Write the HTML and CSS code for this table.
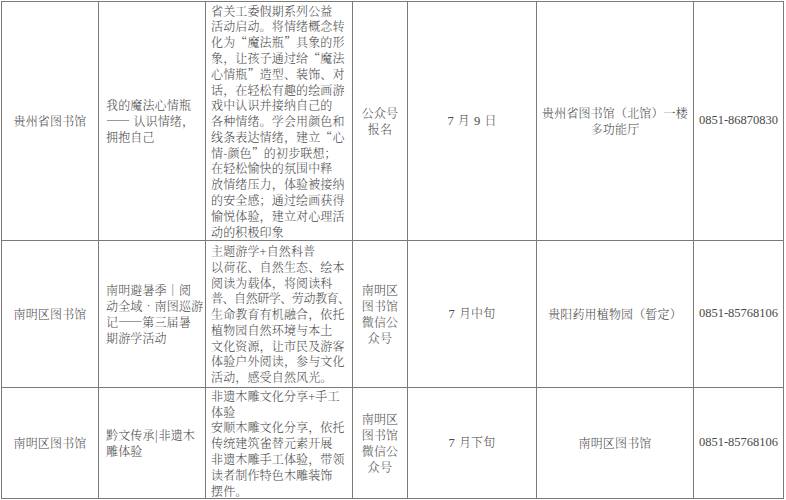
FILE: index.html
```html
<!DOCTYPE html>
<html lang="zh-CN">
<head>
<meta charset="utf-8">
<title>暑期活动安排</title>
<link rel="stylesheet" href="styles.css">
</head>
<body>
<div class="sheet">
  <div class="cell c-center"><div class="txt">贵州省图书馆</div></div>
  <div class="cell c-left"><div class="txt">我的魔法心情瓶<br>—— 认识情绪，<br>拥抱自己</div></div>
  <div class="cell c-desc"><div class="txt">省关工委假期系列公益<br>活动启动。将情绪概念转<br>化为“魔法瓶”具象的形<br>象，让孩子通过给“魔法<br>心情瓶”造型、装饰、对<br>话，在轻松有趣的绘画游<br>戏中认识并接纳自己的<br>各种情绪。学会用颜色和<br>线条表达情绪，建立“心<br>情-颜色”的初步联想；<br>在轻松愉快的氛围中释<br>放情绪压力，体验被接纳<br>的安全感；通过绘画获得<br>愉悦体验，建立对心理活<br>动的积极印象</div></div>
  <div class="cell c-center"><div class="txt">公众号<br>报名</div></div>
  <div class="cell c-center"><div class="txt"><span class="num">7</span>月<span class="num">9</span>日</div></div>
  <div class="cell c-center"><div class="txt">贵州省图书馆（北馆）一楼<br>多功能厅</div></div>
  <div class="cell c-center tel"><div class="txt">0851-86870830</div></div>

  <div class="cell c-center"><div class="txt">南明区图书馆</div></div>
  <div class="cell c-left"><div class="txt">南明避暑季｜阅<br>动全域•南图巡游<br>记——第三届暑<br>期游学活动</div></div>
  <div class="cell c-desc"><div class="txt">主题游学+自然科普<br>以荷花、自然生态、绘本<br>阅读为载体，将阅读科<br><span class="tight">普、自然研学、劳动教育、</span><br>生命教育有机融合，依托<br>植物园自然环境与本土<br>文化资源，让市民及游客<br>体验户外阅读，参与文化<br>活动，感受自然风光。</div></div>
  <div class="cell c-center"><div class="txt">南明区<br>图书馆<br>微信公<br>众号</div></div>
  <div class="cell c-center"><div class="txt"><span class="num">7</span>月中旬</div></div>
  <div class="cell c-center"><div class="txt">贵阳药用植物园（暂定）</div></div>
  <div class="cell c-center tel"><div class="txt">0851-85768106</div></div>

  <div class="cell c-center"><div class="txt">南明区图书馆</div></div>
  <div class="cell c-left"><div class="txt">黔文传承|非遗木<br>雕体验</div></div>
  <div class="cell c-desc"><div class="txt">非遗木雕文化分享+手工<br>体验<br>安顺木雕文化分享，依托<br>传统建筑雀替元素开展<br>非遗木雕手工体验，带领<br>读者制作特色木雕装饰<br>摆件。</div></div>
  <div class="cell c-center"><div class="txt">南明区<br>图书馆<br>微信公<br>众号</div></div>
  <div class="cell c-center"><div class="txt"><span class="num">7</span>月下旬</div></div>
  <div class="cell c-center"><div class="txt">南明区图书馆</div></div>
  <div class="cell c-center tel"><div class="txt">0851-85768106</div></div>
</div>
</body>
</html>
```

FILE: styles.css
```css
html, body {
  margin: 0;
  padding: 0;
  background: #ffffff;
}

body {
  font-family: "Noto Serif CJK SC", "Noto Sans CJK SC", "Liberation Serif", serif;
  font-size: 12px;
  color: #4a4a4a;
}

.sheet {
  display: grid;
  grid-template-columns: 96px 106px 146px 54px 128px 156px 89px;
  grid-template-rows: 238px 146px 110px;
  gap: 1px;
  padding: 1px;
  margin: 1px 0 0 1px;
  width: max-content;
  background: #7a7a7a;
}

.cell {
  background: #ffffff;
  display: flex;
  flex-direction: column;
  justify-content: center;
  line-height: 15.8px;
  font-weight: 300;
  letter-spacing: 0.15px;
  overflow: hidden;
}

.c-center {
  align-items: center;
  text-align: center;
}

.c-left {
  align-items: flex-start;
  text-align: left;
  padding-left: 7px;
}

.c-desc {
  align-items: flex-start;
  text-align: left;
  padding-left: 5px;
  white-space: nowrap;
}

.tight {
  letter-spacing: -0.45px;
}

.num {
  font-family: "Liberation Serif", serif;
  font-size: 12.5px;
  margin: 0 4px;
}

.num:first-child {
  margin-left: 0;
}

.tel {
  font-family: "Liberation Serif", serif;
  font-size: 12.5px;
  font-weight: 400;
  letter-spacing: 0;
}
```
